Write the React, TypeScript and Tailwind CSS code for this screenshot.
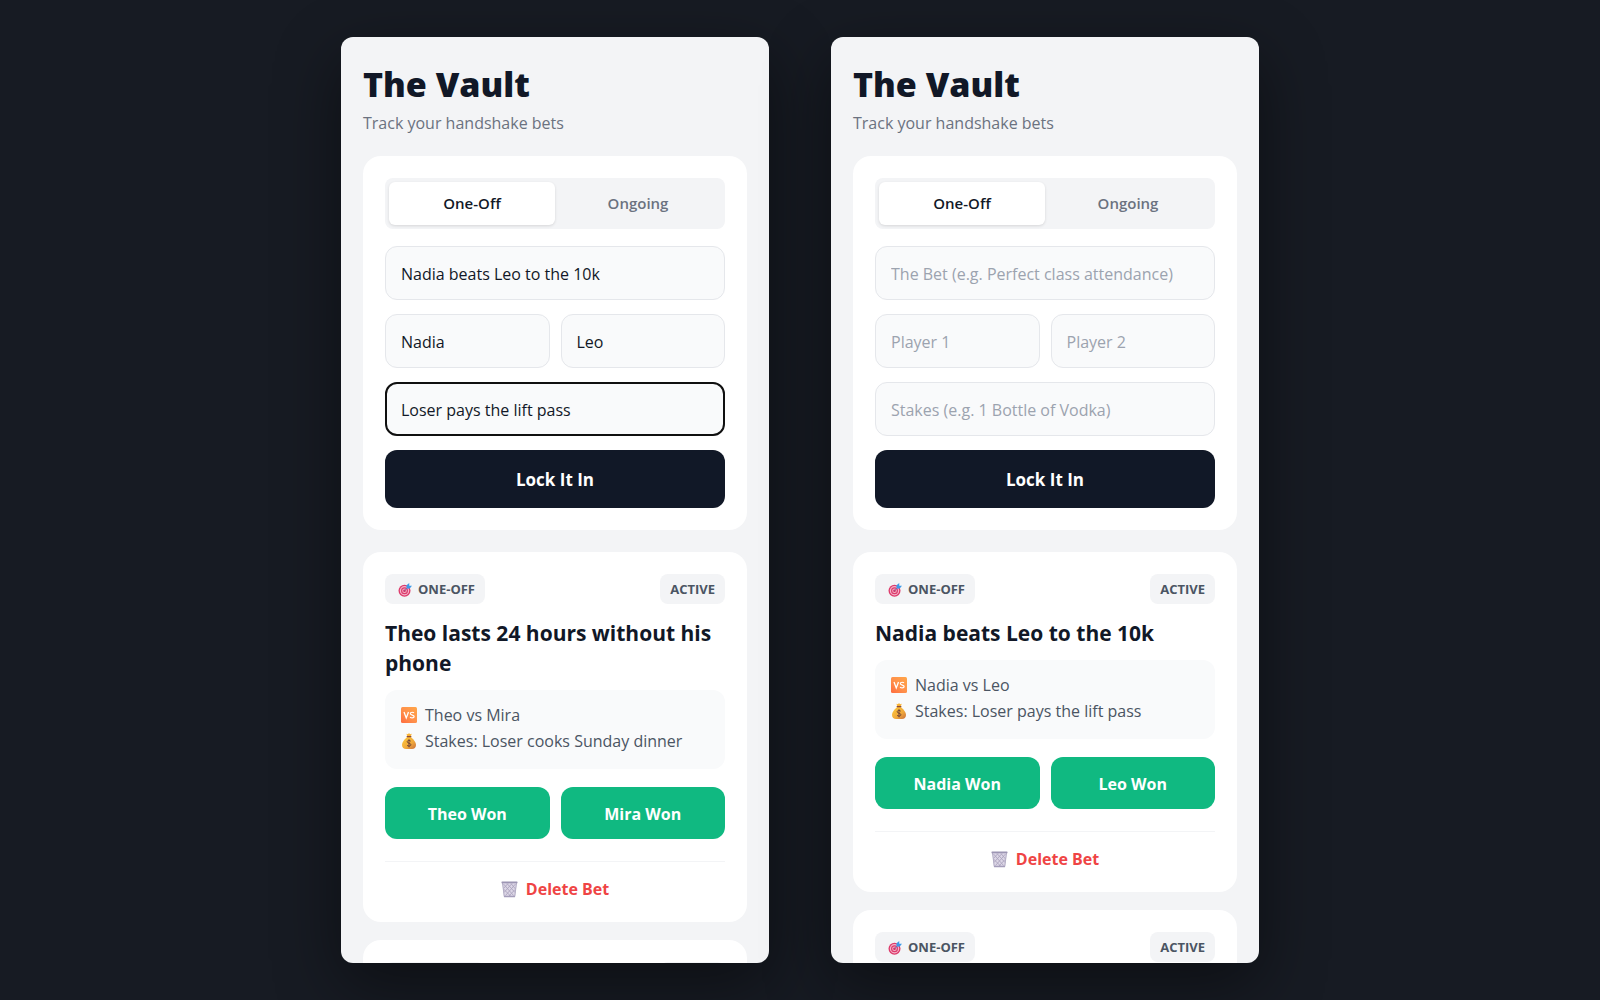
import { useState } from "react";
import { clsx } from "clsx";

interface Bet {
  id: number;
  title: string;
  player1: string;
  player2: string;
  stakes: string;
}

interface Draft {
  title: string;
  player1: string;
  player2: string;
  stakes: string;
}

const theoBet: Bet = {
  id: 1,
  title: "Theo lasts 24 hours without his phone",
  player1: "Theo",
  player2: "Mira",
  stakes: "Loser cooks Sunday dinner",
};

const nadiaBet: Bet = {
  id: 2,
  title: "Nadia beats Leo to the 10k",
  player1: "Nadia",
  player2: "Leo",
  stakes: "Loser pays the lift pass",
};

const emptyDraft: Draft = { title: "", player1: "", player2: "", stakes: "" };

function TargetIcon() {
  return (
    <svg viewBox="0 0 28 28" className="size-[14px] shrink-0" aria-hidden="true">
      <circle cx="13" cy="15.5" r="12" fill="#dd3a6b" />
      <circle cx="13" cy="15.5" r="9.4" fill="#f3b5cb" />
      <circle cx="13" cy="15.5" r="7" fill="#dd3a6b" />
      <circle cx="13" cy="15.5" r="4.6" fill="#f3b5cb" />
      <circle cx="13" cy="15.5" r="2.6" fill="#d42f5e" />
      <path d="M13 15.5 21 7.5" stroke="#7c5fa8" strokeWidth="1.8" />
      <path d="M17 4.5 22.5 0v5.5H28L23.5 11H17Z" fill="#3d9ae8" />
    </svg>
  );
}

function VersusIcon() {
  return (
    <svg viewBox="0 0 32 32" className="size-4 shrink-0" aria-hidden="true">
      <defs>
        <linearGradient id="versus" x1="1" y1="0" x2="0" y2="1">
          <stop offset="0" stopColor="#ffa648" />
          <stop offset="0.55" stopColor="#ff8f4b" />
          <stop offset="1" stopColor="#ff6b3f" />
        </linearGradient>
      </defs>
      <rect width="32" height="32" rx="3" fill="url(#versus)" />
      <path d="m6 10 4.5 12L15 10" fill="none" stroke="#fff" strokeWidth="2.6" />
      <path
        d="M26 11.8c-1-.9-2.3-1.3-3.7-1.3-2 0-3.6.9-3.6 2.6 0 4 7.6 2 7.6 6 0 1.8-1.7 2.8-4 2.8-1.6 0-3-.5-4.2-1.4"
        fill="none"
        stroke="#fff"
        strokeWidth="2.4"
      />
    </svg>
  );
}

function MoneyBagIcon() {
  return (
    <svg viewBox="0 0 32 32" className="size-4 shrink-0" aria-hidden="true">
      <defs>
        <linearGradient id="bag" x1="0" y1="0" x2="1" y2="1">
          <stop offset="0" stopColor="#ffc83a" />
          <stop offset="0.6" stopColor="#f0a83a" />
          <stop offset="1" stopColor="#c96f3e" />
        </linearGradient>
      </defs>
      <path d="M11 1.5 14 2.5 16 0l2 2.500 3.5-1L19.5 7h-7Z" fill="#f9b233" />
      <path
        d="M12.5 8h7c5 4 10.500 10 10.500 16 0 5-3.500 8-8 8H10c-4.500 0-8-3-8-8 0-6 5.500-12 10.500-16Z"
        fill="url(#bag)"
      />
      <rect x="11" y="5.8" width="10" height="2.8" rx="1.4" fill="#8d4a38" />
      <path
        d="M19.5 16.5c-.8-1.3-2-1.8-3.5-1.8-2 0-3.5 1-3.5 2.7 0 4 7.3 2.2 7.3 6 0 1.8-1.7 2.8-3.8 2.8-1.8 0-3.2-.7-4-2M16 12.5v16"
        fill="none"
        stroke="#6b3f35"
        strokeWidth="1.9"
      />
    </svg>
  );
}

function TrashIcon() {
  return (
    <svg viewBox="0 0 34 34" className="size-[17px] shrink-0" aria-hidden="true">
      <path d="M2.5 3h29L28 32H6Z" fill="#dcd6e6" />
      <path
        d="m5 6 20 23M12 5l16 18M20 5l9 11M5 16l14 14M29 6 9 29M22 5 6 23M14 5 5 15M28 17 16 30"
        stroke="#aaa3bd"
        strokeWidth="1.7"
      />
      <path d="M3 4l3.5 27M31 4l-3.5 27" stroke="#b3adc5" strokeWidth="2" />
      <rect x="1" y="1" width="32" height="3.6" rx="1.2" fill="#9c95b3" />
      <rect x="6" y="29.5" width="22" height="3" rx="1" fill="#a49dba" />
    </svg>
  );
}

interface FieldProps {
  label: string;
  value: string;
  active?: boolean;
  onChange: (value: string) => void;
}

function Field({ label, value, active, onChange }: FieldProps) {
  return (
    <input
      type="text"
      aria-label={label}
      placeholder={label}
      value={value}
      onChange={(e) => onChange(e.target.value)}
      className={clsx(
        "h-[54px] w-full min-w-0 rounded-xl border border-gray-200 bg-[#f9fafb] px-[15px] pt-[2px] text-base text-[#111827] placeholder:text-[#9ca3af]",
        active && "outline-2 -outline-offset-2 outline-[#101010]"
      )}
    />
  );
}

function BetForm({ initial, activeField }: { initial: Draft; activeField?: keyof Draft }) {
  const [draft, setDraft] = useState(initial);
  const [type, setType] = useState("One-Off");

  const field = (name: keyof Draft, label: string) => (
    <Field
      label={label}
      value={draft[name]}
      active={activeField === name}
      onChange={(value) => setDraft({ ...draft, [name]: value })}
    />
  );

  return (
    <form
      onSubmit={(e) => e.preventDefault()}
      className="flex flex-col gap-[14px] rounded-[18px] bg-white p-[22px]"
    >
      <div className="mb-[3px] flex rounded-lg bg-[#f3f4f6] p-1">
        {["One-Off", "Ongoing"].map((name) => (
          <button
            key={name}
            type="button"
            aria-pressed={type === name}
            onClick={() => setType(name)}
            className={clsx(
              "h-[43px] flex-1 rounded-md text-[15px] font-semibold",
              type === name
                ? "bg-white text-[#111827] shadow-[0_1px_3px_rgba(0,0,0,0.12)]"
                : "text-[#6b7280]"
            )}
          >
            {name}
          </button>
        ))}
      </div>
      {field("title", "The Bet (e.g. Perfect class attendance)")}
      <div className="grid grid-cols-2 gap-[11px]">
        {field("player1", "Player 1")}
        {field("player2", "Player 2")}
      </div>
      {field("stakes", "Stakes (e.g. 1 Bottle of Vodka)")}
      <button
        type="submit"
        className="h-[58px] rounded-xl bg-[#111827] pt-[2px] text-[17px] font-bold text-white"
      >
        Lock It In
      </button>
    </form>
  );
}

function BetCard({ bet }: { bet: Bet }) {
  return (
    <article className="rounded-[18px] bg-white p-[22px]">
      <div className="flex items-center justify-between text-[13px] font-bold text-[#4b5563]">
        <span className="flex h-[30px] items-center gap-[6px] rounded-lg bg-[#f3f4f6] pt-px pr-[10px] pl-[13px]">
          <TargetIcon />
          ONE-OFF
        </span>
        <span className="flex h-[30px] items-center rounded-lg bg-[#f3f4f6] px-[10px] pt-px">ACTIVE</span>
      </div>
      <h2 className="mt-[14px] text-[21px] leading-[30px] font-bold text-[#111827]">{bet.title}</h2>
      <div className="mt-3 rounded-xl bg-[#f9fafb] px-4 pt-3 pb-[15px] text-base leading-[26px] font-medium text-[#4b5563]">
        <p className="flex items-center gap-2">
          <VersusIcon />
          {bet.player1} vs {bet.player2}
        </p>
        <p className="flex items-center gap-2">
          <MoneyBagIcon />
          Stakes: {bet.stakes}
        </p>
      </div>
      <div className="mt-[18px] grid grid-cols-2 gap-[11px]">
        {[bet.player1, bet.player2].map((player) => (
          <button
            key={player}
            type="button"
            className="h-[52px] rounded-xl bg-[#10b981] pt-px text-base font-bold text-white"
          >
            {player} Won
          </button>
        ))}
      </div>
      <div className="mt-[22px] border-t border-[#f3f4f6] pt-[17px]">
        <button
          type="button"
          className="flex w-full items-center justify-center gap-2 text-base leading-[21px] font-bold text-[#ef4444]"
        >
          <TrashIcon />
          Delete Bet
        </button>
      </div>
    </article>
  );
}

interface VaultProps {
  draft: Draft;
  activeField?: keyof Draft;
  bets: Bet[];
}

function Vault({ draft, activeField, bets }: VaultProps) {
  return (
    <section className="max-w-[428px] flex-1 overflow-y-auto rounded-xl bg-[#f3f4f6] px-[22px] pt-[26px] shadow-[0_22px_66px_rgba(0,0,0,0.45)] [scrollbar-width:none]">
      <header className="mb-[21px]">
        <h1 className="text-[34px] leading-[42px] font-extrabold text-[#111827]">The Vault</h1>
        <p className="mt-[6px] text-base leading-6 text-[#6b7280]">Track your handshake bets</p>
      </header>
      <BetForm initial={draft} activeField={activeField} />
      <div className="mt-[22px] flex flex-col gap-[18px]">
        {bets.map((bet) => (
          <BetCard key={bet.id} bet={bet} />
        ))}
      </div>
    </section>
  );
}

export default function App() {
  return (
    <main className="flex h-screen justify-center gap-[62px] bg-[#171b23] px-6 py-[37px] font-['Segoe_UI','Open_Sans','Noto_Sans',sans-serif]">
      <Vault draft={nadiaBet} activeField="stakes" bets={[theoBet, { ...nadiaBet, id: 3 }]} />
      <Vault draft={emptyDraft} bets={[nadiaBet, theoBet]} />
    </main>
  );
}
